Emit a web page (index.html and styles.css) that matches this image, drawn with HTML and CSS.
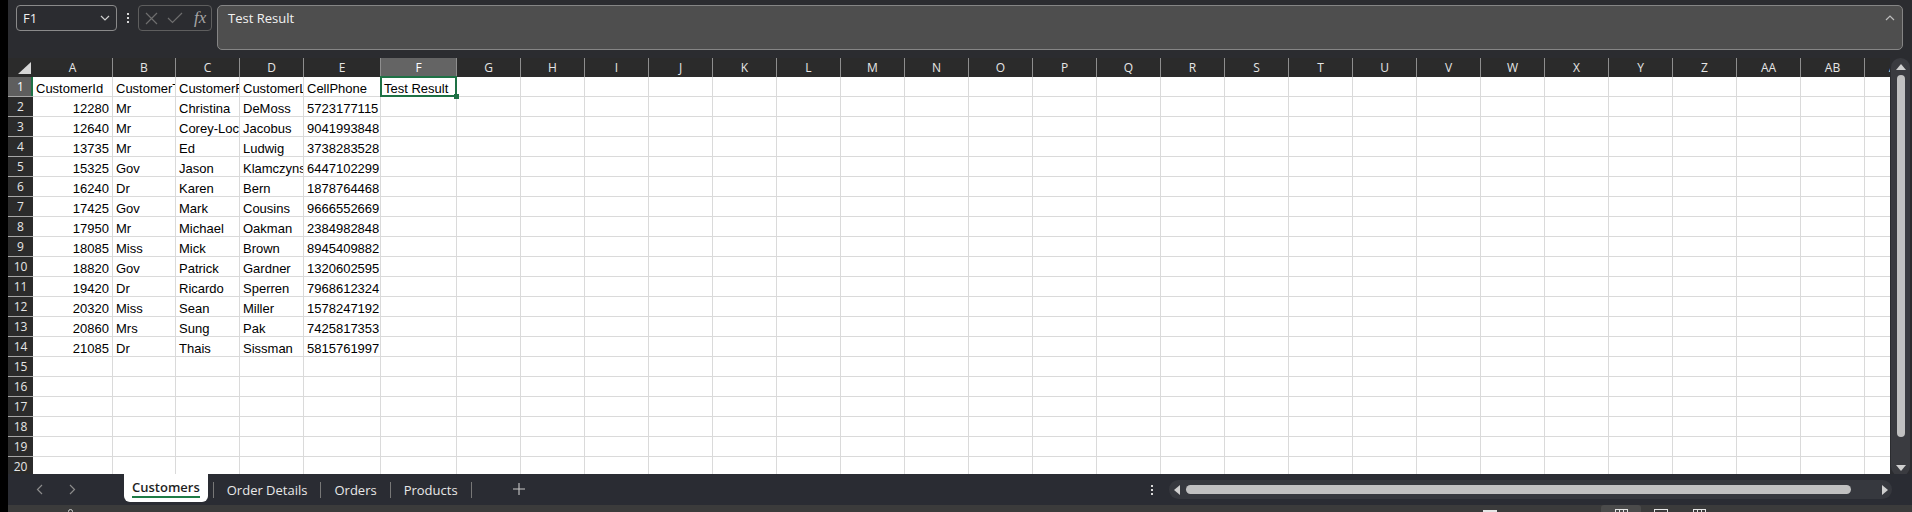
FILE: index.html
```html
<!DOCTYPE html>
<html>
<head>
<meta charset="utf-8">
<title>Customers</title>
<link rel="stylesheet" href="styles.css">
</head>
<body>
<div class="app">
  <div class="topbar">
    <div class="namebox">
      <span>F1</span>
      <svg class="chev" width="10" height="6" viewBox="0 0 10 6"><path d="M1 1 L5 5 L9 1" fill="none" stroke="#cfcfcf" stroke-width="1.2"/></svg>
    </div>
    <div class="vdots"><i></i><i></i><i></i></div>
    <div class="fxbox">
      <svg width="13" height="13" viewBox="0 0 13 13"><path d="M1 1 L12 12 M12 1 L1 12" stroke="#6e6e6e" stroke-width="1.2"/></svg>
      <svg width="16" height="12" viewBox="0 0 16 12"><path d="M1 6 L5.5 10.5 L15 1" fill="none" stroke="#6e6e6e" stroke-width="1.2"/></svg>
      <span class="fx">fx</span>
    </div>
    <div class="formula">
      <span class="ftext">Test Result</span>
      <svg class="caret" width="10" height="6" viewBox="0 0 10 6"><path d="M1 5 L5 1 L9 5" fill="none" stroke="#bdbdbd" stroke-width="1.2"/></svg>
    </div>
  </div>

  <div class="sheet">
    <div class="grid">
      <div class="hrow">
        <div class="corner"><svg width="25" height="19" viewBox="0 0 25 19"><polygon points="10,16 23,16 23,4" fill="#d6d6d6"/></svg></div>
        <div class="ch ca">A</div><div class="ch cb">B</div><div class="ch cc">C</div><div class="ch cd">D</div><div class="ch ce">E</div><div class="ch cf sel">F</div>
        <div class="ch">G</div><div class="ch">H</div><div class="ch">I</div><div class="ch">J</div><div class="ch">K</div><div class="ch">L</div><div class="ch">M</div><div class="ch">N</div><div class="ch">O</div><div class="ch">P</div><div class="ch">Q</div><div class="ch">R</div><div class="ch">S</div><div class="ch">T</div><div class="ch">U</div><div class="ch">V</div><div class="ch">W</div><div class="ch">X</div><div class="ch">Y</div><div class="ch">Z</div><div class="ch">AA</div><div class="ch">AB</div><div class="ch">AC</div>
      </div>

      <div class="row"><div class="rh sel">1</div><div class="c ca">CustomerId</div><div class="c cb">CustomerTitle</div><div class="c cc">CustomerFirstName</div><div class="c cd">CustomerLastName</div><div class="c ce">CellPhone</div><div class="c cf active">Test Result</div><div class="rest"></div></div>
      <div class="row"><div class="rh">2</div><div class="c ca num">12280</div><div class="c cb">Mr</div><div class="c cc">Christina</div><div class="c cd">DeMoss</div><div class="c ce">5723177115</div><div class="c cf"></div><div class="rest"></div></div>
      <div class="row"><div class="rh">3</div><div class="c ca num">12640</div><div class="c cb">Mr</div><div class="c cc">Corey-Lockhart</div><div class="c cd">Jacobus</div><div class="c ce">9041993848</div><div class="c cf"></div><div class="rest"></div></div>
      <div class="row"><div class="rh">4</div><div class="c ca num">13735</div><div class="c cb">Mr</div><div class="c cc">Ed</div><div class="c cd">Ludwig</div><div class="c ce">3738283528</div><div class="c cf"></div><div class="rest"></div></div>
      <div class="row"><div class="rh">5</div><div class="c ca num">15325</div><div class="c cb">Gov</div><div class="c cc">Jason</div><div class="c cd">Klamczynski</div><div class="c ce">6447102299</div><div class="c cf"></div><div class="rest"></div></div>
      <div class="row"><div class="rh">6</div><div class="c ca num">16240</div><div class="c cb">Dr</div><div class="c cc">Karen</div><div class="c cd">Bern</div><div class="c ce">1878764468</div><div class="c cf"></div><div class="rest"></div></div>
      <div class="row"><div class="rh">7</div><div class="c ca num">17425</div><div class="c cb">Gov</div><div class="c cc">Mark</div><div class="c cd">Cousins</div><div class="c ce">9666552669</div><div class="c cf"></div><div class="rest"></div></div>
      <div class="row"><div class="rh">8</div><div class="c ca num">17950</div><div class="c cb">Mr</div><div class="c cc">Michael</div><div class="c cd">Oakman</div><div class="c ce">2384982848</div><div class="c cf"></div><div class="rest"></div></div>
      <div class="row"><div class="rh">9</div><div class="c ca num">18085</div><div class="c cb">Miss</div><div class="c cc">Mick</div><div class="c cd">Brown</div><div class="c ce">8945409882</div><div class="c cf"></div><div class="rest"></div></div>
      <div class="row"><div class="rh">10</div><div class="c ca num">18820</div><div class="c cb">Gov</div><div class="c cc">Patrick</div><div class="c cd">Gardner</div><div class="c ce">1320602595</div><div class="c cf"></div><div class="rest"></div></div>
      <div class="row"><div class="rh">11</div><div class="c ca num">19420</div><div class="c cb">Dr</div><div class="c cc">Ricardo</div><div class="c cd">Sperren</div><div class="c ce">7968612324</div><div class="c cf"></div><div class="rest"></div></div>
      <div class="row"><div class="rh">12</div><div class="c ca num">20320</div><div class="c cb">Miss</div><div class="c cc">Sean</div><div class="c cd">Miller</div><div class="c ce">1578247192</div><div class="c cf"></div><div class="rest"></div></div>
      <div class="row"><div class="rh">13</div><div class="c ca num">20860</div><div class="c cb">Mrs</div><div class="c cc">Sung</div><div class="c cd">Pak</div><div class="c ce">7425817353</div><div class="c cf"></div><div class="rest"></div></div>
      <div class="row"><div class="rh">14</div><div class="c ca num">21085</div><div class="c cb">Dr</div><div class="c cc">Thais</div><div class="c cd">Sissman</div><div class="c ce">5815761997</div><div class="c cf"></div><div class="rest"></div></div>
      <div class="row"><div class="rh">15</div><div class="c ca"></div><div class="c cb"></div><div class="c cc"></div><div class="c cd"></div><div class="c ce"></div><div class="c cf"></div><div class="rest"></div></div>
      <div class="row"><div class="rh">16</div><div class="c ca"></div><div class="c cb"></div><div class="c cc"></div><div class="c cd"></div><div class="c ce"></div><div class="c cf"></div><div class="rest"></div></div>
      <div class="row"><div class="rh">17</div><div class="c ca"></div><div class="c cb"></div><div class="c cc"></div><div class="c cd"></div><div class="c ce"></div><div class="c cf"></div><div class="rest"></div></div>
      <div class="row"><div class="rh">18</div><div class="c ca"></div><div class="c cb"></div><div class="c cc"></div><div class="c cd"></div><div class="c ce"></div><div class="c cf"></div><div class="rest"></div></div>
      <div class="row"><div class="rh">19</div><div class="c ca"></div><div class="c cb"></div><div class="c cc"></div><div class="c cd"></div><div class="c ce"></div><div class="c cf"></div><div class="rest"></div></div>
      <div class="row"><div class="rh">20</div><div class="c ca"></div><div class="c cb"></div><div class="c cc"></div><div class="c cd"></div><div class="c ce"></div><div class="c cf"></div><div class="rest"></div></div>
    </div>
    <div class="vscroll">
      <div class="vtrack">
        <svg class="varrow" width="10" height="6" viewBox="0 0 10 6"><polygon points="0,6 5,0 10,6" fill="#cfcfcf"/></svg>
        <div class="vthumb"></div>
        <svg class="varrow" width="10" height="6" viewBox="0 0 10 6"><polygon points="0,0 10,0 5,6" fill="#cfcfcf"/></svg>
      </div>
    </div>
  </div>

  <div class="tabbar">
    <div class="nav">
      <svg width="7" height="11" viewBox="0 0 7 11"><path d="M6 1 L1.5 5.5 L6 10" fill="none" stroke="#8c8c8c" stroke-width="1.2"/></svg>
      <svg width="7" height="11" viewBox="0 0 7 11"><path d="M1 1 L5.5 5.5 L1 10" fill="none" stroke="#8c8c8c" stroke-width="1.2"/></svg>
    </div>
    <div class="tab active"><span class="lbl">Customers</span></div>
    <div class="sep first"></div>
    <div class="tab">Order Details</div>
    <div class="sep"></div>
    <div class="tab">Orders</div>
    <div class="sep"></div>
    <div class="tab">Products</div>
    <div class="sep"></div>
    <svg class="plus" width="12" height="12" viewBox="0 0 12 12"><path d="M6 0 V12 M0 6 H12" stroke="#c8c8c8" stroke-width="1.1"/></svg>
    <div class="spacer"></div>
    <div class="hdots"><i></i><i></i><i></i></div>
    <div class="htrack">
      <svg class="harrow" width="6" height="10" viewBox="0 0 6 10"><polygon points="6,0 6,10 0,5" fill="#cfcfcf"/></svg>
      <div class="hthumb"></div>
      <svg class="harrow r" width="6" height="10" viewBox="0 0 6 10"><polygon points="0,0 0,10 6,5" fill="#cfcfcf"/></svg>
    </div>
  </div>

  <div class="status">
    <div class="st-dot"></div>
    <div class="st-rect"></div>
    <div class="st-btn"><div class="st-grid"></div></div>
    <div class="st-page"></div>
    <div class="st-grid2"></div>
  </div>
</div>
</body>
</html>
```

FILE: styles.css
```css
html, body {
  margin: 0;
  padding: 0;
}
body {
  background: #000;
  width: 1912px;
  height: 512px;
  overflow: hidden;
  font-family: "Open Sans", "Noto Sans", sans-serif;
}
.app {
  margin-left: 8px;
  width: 1904px;
  height: 512px;
  display: flex;
  flex-direction: column;
}

/* ---------- formula bar ---------- */
.topbar {
  height: 58px;
  flex: none;
  box-sizing: border-box;
  background: #2b2c30;
  display: flex;
  align-items: flex-start;
  padding: 5px 9px 0 8px;
}
.namebox {
  width: 101px;
  height: 26px;
  box-sizing: border-box;
  border: 1px solid #8a8a8a;
  border-radius: 4px;
  display: flex;
  align-items: center;
  justify-content: space-between;
  padding: 0 6px;
  color: #f0f0f0;
  font-size: 13px;
}
.vdots {
  width: 21px;
  height: 26px;
  display: flex;
  flex-direction: column;
  align-items: center;
  justify-content: center;
  gap: 2px;
}
.vdots i, .hdots i {
  display: block;
  width: 2px;
  height: 2px;
  background: #d8d8d8;
}
.fxbox {
  width: 74px;
  height: 26px;
  box-sizing: border-box;
  border: 1px solid #5e5e5e;
  border-radius: 4px;
  display: flex;
  align-items: center;
  padding: 0 0 0 6px;
  gap: 9px;
}
.fx {
  font-family: "Liberation Serif", serif;
  font-style: italic;
  font-size: 17px;
  color: #a6a6a6;
  margin-left: 2px;
  line-height: 20px;
}
.formula {
  margin-left: 5px;
  flex: 1;
  height: 45px;
  box-sizing: border-box;
  background: #4e4e4e;
  border: 1px solid #858585;
  border-radius: 5px;
  display: flex;
  align-items: flex-start;
  justify-content: space-between;
  padding: 3px 7px 0 10px;
}
.ftext {
  color: #f2f2f2;
  font-size: 13px;
  line-height: 18px;
}
.caret {
  margin-top: 6px;
}

/* ---------- sheet ---------- */
.sheet {
  height: 416px;
  flex: none;
  display: flex;
}
.grid {
  width: 1882px;
  flex: none;
  overflow: hidden;
  background: #fff;
}
.hrow {
  display: flex;
  height: 19px;
  background: #2b2b2b;
  color: #e6e6e6;
  font-size: 12px;
}
.corner {
  width: 25px;
  flex: none;
  height: 19px;
}
.corner svg { display: block; }
.ch {
  flex: none;
  width: 64px;
  height: 19px;
  box-sizing: border-box;
  border-right: 1px solid #8e8e8e;
  text-align: center;
  line-height: 19px;
}
.ch.sel {
  background: #646464;
  color: #fff;
}
.ca { width: 80px; }
.cb { width: 63px; }
.cc { width: 64px; }
.cd { width: 64px; }
.ce { width: 77px; }
.cf { width: 76px; }

.row {
  display: flex;
  height: 20px;
}
.rh {
  flex: none;
  width: 25px;
  height: 20px;
  box-sizing: border-box;
  background: #2b2b2b;
  border-bottom: 1px solid #a6a6a6;
  color: #e6e6e6;
  font-size: 12px;
  line-height: 20px;
  text-align: center;
}
.rh.sel {
  background: #5e5e5e;
  color: #fff;
  box-shadow: inset -2px 0 0 #1e7145;
}
.c {
  flex: none;
  height: 20px;
  box-sizing: border-box;
  border-right: 1px solid #dadada;
  border-bottom: 1px solid #dadada;
  padding: 3px 3px 0;
  font-family: "Liberation Sans", Arial, sans-serif;
  font-size: 13px;
  line-height: 17px;
  color: #000;
  white-space: nowrap;
  overflow: hidden;
}
.c.num { text-align: right; }
.c.active {
  position: relative;
  overflow: visible;
}
.c.active::after {
  content: "";
  position: absolute;
  left: -1px;
  top: -1px;
  right: -1px;
  bottom: -1px;
  border: 2px solid #1e7145;
}
.c.active::before {
  content: "";
  position: absolute;
  right: -3px;
  bottom: -3px;
  width: 5px;
  height: 5px;
  background: #1e7145;
  z-index: 2;
}
.rest {
  flex: none;
  width: 1472px;
  height: 20px;
  box-sizing: border-box;
  border-bottom: 1px solid #dadada;
  background: repeating-linear-gradient(90deg, #fff 0 63px, #dadada 63px 64px);
}

/* vertical scrollbar */
.vscroll {
  width: 22px;
  flex: none;
  background: #2b2c30;
  display: flex;
}
.vtrack {
  width: 19px;
  margin-left: 1px;
  height: 418px;
  box-sizing: border-box;
  background: #3a3b40;
  border-radius: 10px;
  display: flex;
  flex-direction: column;
  align-items: center;
  padding: 6px 0 5px;
}
.varrow { flex: none; display: block; }
.vthumb {
  width: 8px;
  flex: 1;
  margin: 5px 0 28px;
  background: #c1c1c1;
  border-radius: 4px;
}

/* ---------- sheet tabs ---------- */
.tabbar {
  height: 31px;
  flex: none;
  background: #2a2c33;
  display: flex;
  align-items: flex-start;
  font-size: 13px;
  position: relative;
  z-index: 1;
}
.nav {
  width: 116px;
  height: 31px;
  flex: none;
  display: flex;
  align-items: center;
  padding-left: 28px;
  box-sizing: border-box;
  gap: 26px;
}
.nav svg { display: block; }
.tab {
  flex: none;
  height: 31px;
  box-sizing: border-box;
  padding: 7px 13px 0;
  line-height: 18px;
  color: #e8e8e8;
}
.tab.active {
  height: 28px;
  background: #fff;
  border-radius: 0 0 6px 6px;
  padding: 4px 8px 0;
  color: #1f1f1f;
  font-weight: 600;
}
.lbl {
  display: block;
  line-height: 18px;
  border-bottom: 2px solid #1e7b45;
}
.sep {
  flex: none;
  width: 1px;
  height: 16px;
  margin-top: 8px;
  background: #777;
}
.sep.first { margin-left: 5px; }
.plus {
  flex: none;
  margin: 9px 0 0 41px;
  display: block;
}
.spacer { flex: 1; }
.hdots {
  width: 4px;
  height: 31px;
  display: flex;
  flex-direction: column;
  align-items: center;
  justify-content: center;
  gap: 2px;
  margin-right: 15px;
}
.htrack {
  flex: none;
  width: 723px;
  height: 19px;
  margin: 6px 20px 0 0;
  background: #36383e;
  border-radius: 10px;
  display: flex;
  align-items: center;
  box-sizing: border-box;
  padding: 0 4px 0 5px;
}
.harrow { display: block; flex: none; }
.hthumb {
  width: 665px;
  height: 9px;
  margin-left: 6px;
  background: #c1c1c1;
  border-radius: 5px;
}
.harrow.r { margin-left: auto; }

/* ---------- status bar ---------- */
.status {
  height: 7px;
  flex: none;
  background: #3b3b3b;
  display: flex;
  align-items: flex-start;
  overflow: hidden;
}
.st-dot {
  margin: 4px 0 0 60px;
  width: 5px;
  height: 5px;
  border-radius: 3px 3px 0 0;
  border: 1px solid #d0d0d0;
  box-sizing: border-box;
}
.st-rect {
  margin: 5px 0 0 1410px;
  width: 14px;
  height: 4px;
  background: #e6e6e6;
}
.st-btn {
  margin-left: 104px;
  width: 40px;
  height: 7px;
  background: #4b4b4b;
  border-radius: 3px 3px 0 0;
  display: flex;
  justify-content: center;
}
.st-grid, .st-grid2 {
  margin-top: 4px;
  width: 13px;
  height: 5px;
  box-sizing: border-box;
  border: 1px solid #e6e6e6;
  border-bottom: none;
  background: linear-gradient(90deg, transparent 3px, #e6e6e6 3px 4px, transparent 4px 7px, #e6e6e6 7px 8px, transparent 8px);
}
.st-page {
  margin: 4px 0 0 13px;
  width: 14px;
  height: 5px;
  box-sizing: border-box;
  border: 1px solid #e6e6e6;
  border-bottom: none;
}
.st-grid2 { margin-left: 25px; }
```
